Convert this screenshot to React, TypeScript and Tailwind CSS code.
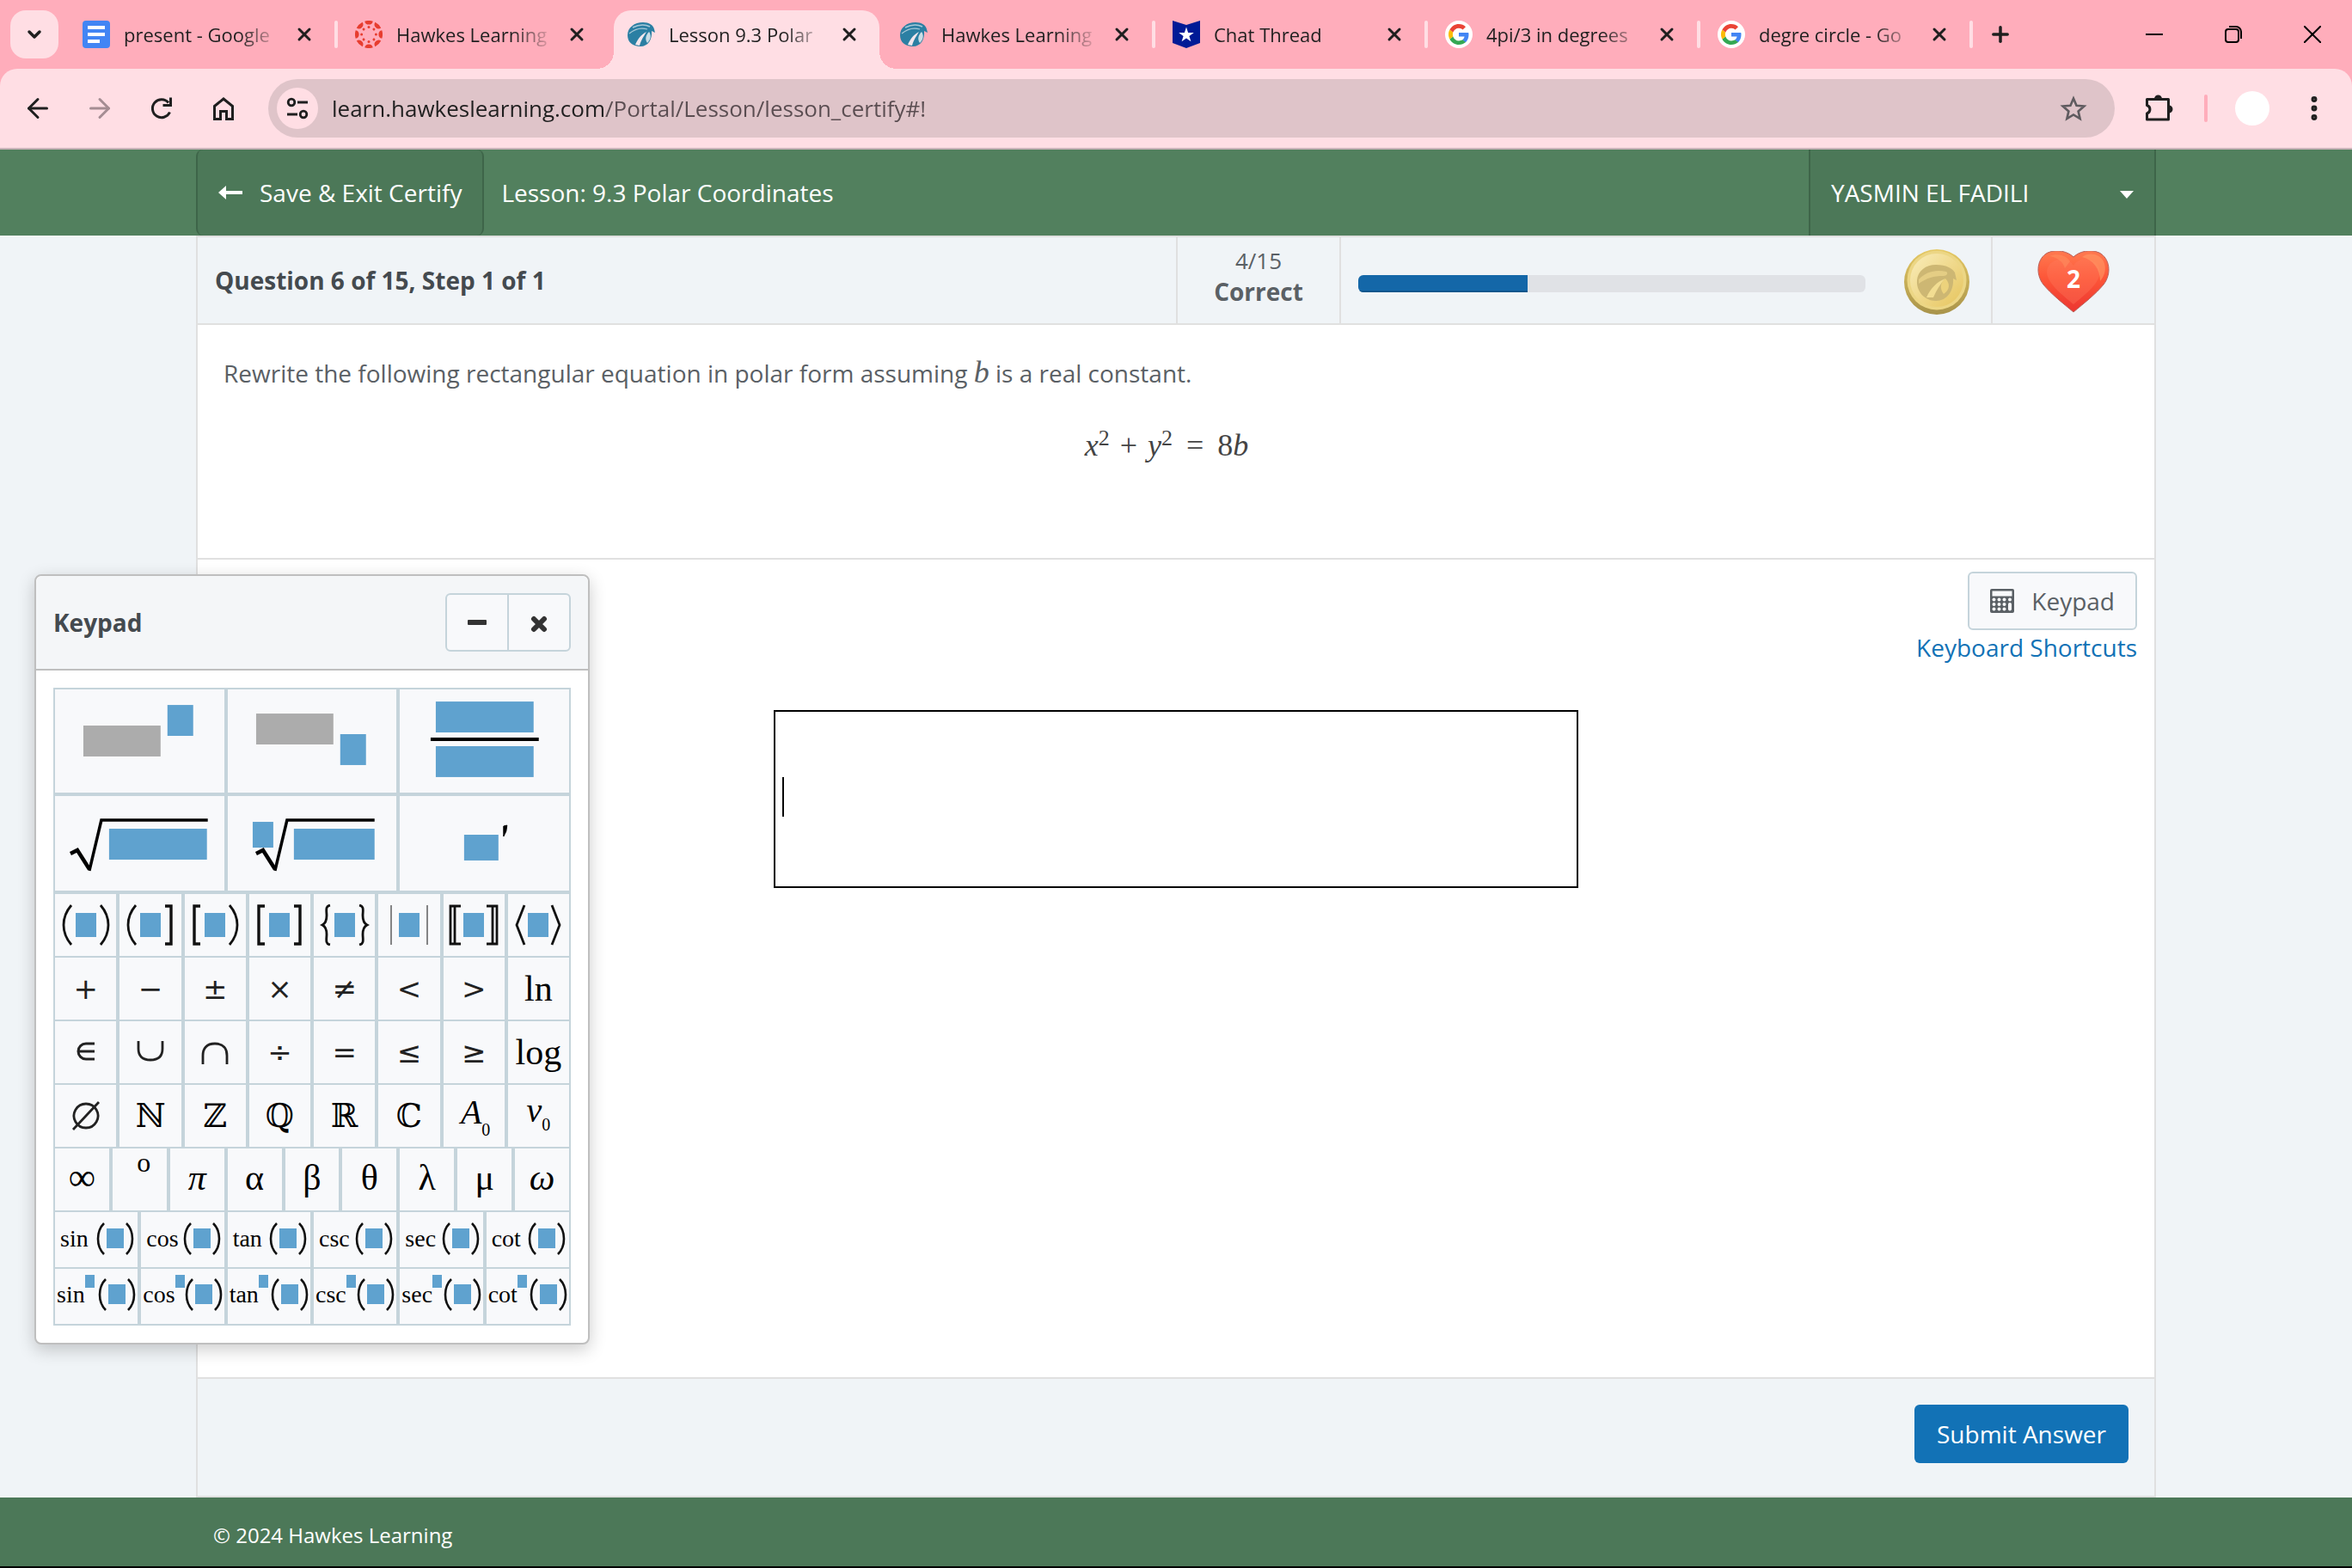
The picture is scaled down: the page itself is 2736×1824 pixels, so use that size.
import React from "react";
import {
  ArrowLeft,
  ArrowRight,
  ChevronDown,
  EllipsisVertical,
  Plus,
  X,
} from "lucide-react";

type IconProps = { className?: string };

/* ---------- favicons ---------- */

function DocsIcon() {
  return (
    <svg viewBox="0 0 32 32" className="size-8 shrink-0" aria-hidden="true">
      <rect width="32" height="32" rx="4" fill="#4285f4" />
      <path d="M6 6h20v4H6zM6 14h20v4H6zM6 22h14v4H6z" fill="#fff" />
    </svg>
  );
}

function CanvasIcon() {
  const spokes = [0, 45, 90, 135, 180, 225, 270, 315];
  return (
    <svg viewBox="0 0 32 32" className="size-8 shrink-0" aria-hidden="true" fill="#e73d2f">
      {spokes.map((a) => (
        <g key={a} transform={`rotate(${a} 16 16)`}>
          <path d="M11.2 .7a16 16 0 0 1 9.6 0a4.9 4.9 0 0 1-9.6 0z" />
          <circle cx="16" cy="7.6" r="1.5" />
        </g>
      ))}
    </svg>
  );
}

function HawkesIcon() {
  return (
    <svg viewBox="0 0 32 32" className="size-8 shrink-0" aria-hidden="true">
      <path
        d="M0 17C0 8 8 2 18 2c7 0 12 3 13 8l1 4-4-2c1 10-4 18-13 18C6 30 0 25 0 17z"
        fill="#2b7fa3"
      />
      <path d="M6 8c6-3 14-4 20-1" stroke="#a8c9d8" strokeWidth="1.6" fill="none" />
      <path d="M2 15c6-5 14-7 21-5" stroke="#a8c9d8" strokeWidth="1.2" fill="none" />
      <path d="M9 28c3-7 7-12 13-15-3 5-6 9-8 16z" fill="#f3e6ec" />
      <path d="M25 13c3 4 2 9-2 13-3-4-2-9 2-13z" fill="#c9dde6" />
    </svg>
  );
}

function ChatIcon() {
  return (
    <svg viewBox="0 0 32 32" className="size-8 shrink-0" aria-hidden="true">
      <path d="M0 0l16 5L32 0v26l-16 6L0 26z" fill="#001a96" />
      <path
        d="M16 7.500l2.100 6.400h6.700l-5.400 4 2 6.400-5.400-3.900-5.400 3.900 2-6.400-5.400-4h6.700z"
        fill="#fff"
      />
    </svg>
  );
}

function GoogleIcon() {
  return (
    <svg viewBox="0 0 32 32" className="size-8 shrink-0" aria-hidden="true">
      <circle cx="16" cy="16" r="16" fill="#fff" />
      <g transform="translate(4 4)">
        <path fill="#4285f4" d="M23.5 12.3c0-.9-.1-1.5-.3-2.2H12v4.5h6.5c-.1 1.1-.8 2.8-2.4 3.9l3.7 2.9c2.300-2.100 3.700-5.200 3.700-9.100z" />
        <path fill="#34a853" d="M12 24c3.200 0 5.900-1.100 7.900-2.900l-3.700-2.900c-1 .7-2.400 1.200-4.200 1.200-3.100 0-5.800-2.100-6.700-5l-3.900 3C3.400 21.300 7.400 24 12 24z" />
        <path fill="#fbbc05" d="M5.300 14.400c-.3-.8-.4-1.600-.4-2.400s.1-1.600.4-2.400L1.400 6.600C.5 8.200 0 10 0 12s.5 3.800 1.400 5.400z" />
        <path fill="#ea4335" d="M12 4.700c2.200 0 3.700 1 4.600 1.800L20 3.200C17.900 1.200 15.200 0 12 0 7.400 0 3.400 2.700 1.400 6.600l3.900 3c.9-2.800 3.600-4.900 6.700-4.900z" />
      </g>
    </svg>
  );
}

/* ---------- toolbar icons ---------- */

function ReloadIcon({ className }: IconProps) {
  return (
    <svg viewBox="0 0 28 28" className={className} aria-hidden="true" fill="none" stroke="#1f1f1f" strokeWidth="3">
      <path d="M23.500 18.500A10.500 10.500 0 1 1 22 7.500" />
      <path d="M24.500 1.500v9h-9" />
    </svg>
  );
}

function HomeIcon({ className }: IconProps) {
  return (
    <svg viewBox="0 0 28 28" className={className} aria-hidden="true" fill="none" stroke="#1f1f1f" strokeWidth="3">
      <path d="M3.500 11.500L14 3l10.500 8.500v15H17.500v-9h-7v9H3.500z" />
    </svg>
  );
}

function TuneIcon({ className }: IconProps) {
  return (
    <svg viewBox="0 0 28 28" className={className} aria-hidden="true" fill="none" stroke="#1f1f1f" strokeWidth="2.800">
      <circle cx="7" cy="7" r="3.800" />
      <path d="M14 7h12M2 21h12" />
      <circle cx="21" cy="21" r="3.800" />
    </svg>
  );
}

function StarIcon({ className }: IconProps) {
  return (
    <svg viewBox="0 0 32 32" className={className} aria-hidden="true" fill="none" stroke="#5f5b5f" strokeWidth="2.600">
      <path d="M16 4.500l3.500 8.200 8.900.8-6.800 5.900 2 8.700-7.600-4.600-7.600 4.600 2-8.700-6.800-5.900 8.900-.8z" />
    </svg>
  );
}

function PuzzleIcon({ className }: IconProps) {
  return (
    <svg viewBox="0 0 34 34" className={className} aria-hidden="true">
      <path
        d="M3.500 6.500h25v23.500h-25v-7a5 5 0 0 0 0-9.500z"
        fill="none"
        stroke="#1f1f1f"
        strokeWidth="3"
        strokeLinejoin="round"
      />
      <path d="M12 6a4.500 4.500 0 0 1 9 0zM29 13.500a4.500 4.500 0 0 1 0 9z" fill="#1f1f1f" />
    </svg>
  );
}

/* ---------- browser chrome ---------- */

type Tab = { title: string; icon: React.ReactNode; active?: boolean; sep?: boolean };

const tabs: Tab[] = [
  { title: "present - Google", icon: <DocsIcon />, sep: true },
  { title: "Hawkes Learning", icon: <CanvasIcon /> },
  { title: "Lesson 9.3 Polar", icon: <HawkesIcon />, active: true },
  { title: "Hawkes Learning", icon: <HawkesIcon />, sep: true },
  { title: "Chat Thread", icon: <ChatIcon />, sep: true },
  { title: "4pi/3 in degrees", icon: <GoogleIcon />, sep: true },
  { title: "degre circle - Go", icon: <GoogleIcon />, sep: true },
];

function BrowserTab({ tab }: { tab: Tab }) {
  return (
    <div className="relative flex h-full w-[317px] shrink pt-3">
      {tab.active && (
        <>
          <span className="absolute bottom-0 -left-4 size-5 bg-[radial-gradient(circle_at_0_0,transparent_20px,#ffdee4_20px)]" />
          <span className="absolute bottom-0 -right-4 size-5 bg-[radial-gradient(circle_at_100%_0,transparent_20px,#ffdee4_20px)]" />
        </>
      )}
      <div
        className={
          tab.active
            ? "mx-1 flex min-w-0 flex-1 items-center rounded-t-[20px] bg-[#ffdee4] px-4 pb-3"
            : "mx-1 flex min-w-0 flex-1 items-center px-4 pb-3"
        }
      >
        {tab.icon}
        <span className="ml-4 w-[182px] whitespace-nowrap text-[22px] leading-8 text-[#1f1f1f] [mask-image:linear-gradient(to_right,black_134px,transparent_184px)]">
          {tab.title}
        </span>
        <button aria-label={`Close ${tab.title}`} className="ml-3 flex size-8 items-center justify-center">
          <X className="size-6 text-[#1f1f1f]" strokeWidth={3} />
        </button>
      </div>
      {tab.sep && <span className="absolute right-0 top-6 h-8 w-1 rounded-full bg-[#ffdee4]" />}
    </div>
  );
}

function BrowserChrome() {
  return (
    <div className="bg-[#ffadbb]">
      <div className="flex h-20 items-start">
        <button
          aria-label="Search tabs"
          className="mt-3 ml-3 mr-2 flex h-14 w-14 items-center justify-center rounded-[18px] bg-[#ffdee4]"
        >
          <ChevronDown className="size-6 text-[#1f1f1f]" strokeWidth={3.5} />
        </button>
        {tabs.map((t, i) => (
          <BrowserTab key={i} tab={t} />
        ))}
        <button aria-label="New tab" className="ml-4 mt-6 flex size-8 items-center justify-center">
          <Plus className="size-7 text-[#1f1f1f]" strokeWidth={3} />
        </button>
        <div className="ml-auto mt-5 flex gap-[52px] pr-[26px]">
          <button aria-label="Minimize" className="flex size-10 items-center justify-center">
            <svg viewBox="0 0 20 20" className="size-5"><path d="M0 10h20" stroke="#000" strokeWidth="2" /></svg>
          </button>
          <button aria-label="Restore" className="flex size-10 items-center justify-center">
            <svg viewBox="0 0 22 22" className="size-[22px]" fill="none" stroke="#000" strokeWidth="2">
              <rect x="2" y="5" width="15" height="15" rx="3" />
              <path d="M6 2h8a6 6 0 0 1 6 6v8" />
            </svg>
          </button>
          <button aria-label="Close window" className="flex size-10 items-center justify-center">
            <svg viewBox="0 0 20 20" className="size-5"><path d="M0 0l20 20M20 0L0 20" stroke="#000" strokeWidth="2" /></svg>
          </button>
        </div>
      </div>

      <div className="flex h-[94px] items-center rounded-t-[20px] border-b-2 border-[#c9b4b9] bg-[#ffdee4] pl-6">
        <div className="flex gap-8">
          <button aria-label="Back" className="flex size-10 items-center justify-center">
            <ArrowLeft className="size-9 text-[#1f1f1f]" strokeWidth={2} />
          </button>
          <button aria-label="Forward" className="flex size-10 items-center justify-center">
            <ArrowRight className="size-9 text-[#a58d93]" strokeWidth={2} />
          </button>
          <button aria-label="Reload" className="flex size-10 items-center justify-center">
            <ReloadIcon className="size-7" />
          </button>
          <button aria-label="Home" className="flex size-10 items-center justify-center">
            <HomeIcon className="size-7" />
          </button>
        </div>
        <div className="ml-8 flex h-[68px] min-w-0 flex-1 items-center rounded-full bg-[#dfc4c9] pl-[10px] pr-8">
          <button aria-label="Site information" className="flex size-12 items-center justify-center rounded-full bg-[#ffdee4]">
            <TuneIcon className="size-7" />
          </button>
          <input
            aria-label="Address"
            type="text"
            readOnly
            value="learn.hawkeslearning.com/Portal/Lesson/lesson_certify#!"
            className="ml-4 min-w-0 flex-1 bg-[linear-gradient(to_right,#1f1f1f_318px,#5a4d51_318px)] bg-clip-text text-[26px] leading-10 text-transparent outline-none"
          />
          <button aria-label="Bookmark this tab">
            <StarIcon className="size-8" />
          </button>
        </div>
        <div className="flex items-center pl-[34px] pr-6">
          <button aria-label="Extensions">
            <PuzzleIcon className="size-[34px]" />
          </button>
          <span className="ml-9 h-8 w-1 rounded-full bg-[#ffadbb]" />
          <button aria-label="Profile" className="ml-8 size-10 rounded-full bg-white" />
          <button aria-label="Menu" className="ml-8 flex size-10 items-center justify-center">
            <EllipsisVertical className="size-9 text-[#1f1f1f]" strokeWidth={2.6} />
          </button>
        </div>
      </div>
    </div>
  );
}

/* ---------- lesson header ---------- */

function LessonHeader() {
  return (
    <header className="bg-[#52805e] text-white">
      <div className="mx-auto flex h-[100px] w-5/6 items-stretch">
        <button className="flex items-center rounded-lg border-x-2 border-[#3e6549] bg-[#4c7858] px-6">
          <svg viewBox="0 0 28 20" className="w-7" aria-hidden="true">
            <path d="M0 10l9-8v6h19v4H9v6z" fill="#fff" />
          </svg>
          <span className="ml-5">Save &amp; Exit Certify</span>
        </button>
        <h1 className="ml-5 flex items-center">Lesson: 9.3 Polar Coordinates</h1>
        <button className="ml-auto flex w-[404px] items-center justify-between border-x-2 border-[#3e6549] bg-[#4c7858] px-6">
          YASMIN EL FADILI
          <svg viewBox="0 0 16 9" className="mt-1 w-4" aria-hidden="true">
            <path d="M0 0h16L8 9z" fill="#fff" />
          </svg>
        </button>
      </div>
    </header>
  );
}

function Coin() {
  return (
    <svg viewBox="0 0 76 76" className="size-[76px]" role="img" aria-label="Certification coin">
      <defs>
        <linearGradient id="rim" x1="0" y1="0" x2="0" y2="1">
          <stop offset="0" stopColor="#e6c964" />
          <stop offset="1" stopColor="#a8934a" />
        </linearGradient>
        <linearGradient id="face" x1="0" y1="0" x2="1" y2="1">
          <stop offset="0" stopColor="#f9edbb" />
          <stop offset="1" stopColor="#e6c45c" />
        </linearGradient>
      </defs>
      <circle cx="38" cy="38" r="38" fill="url(#rim)" />
      <circle cx="38" cy="36" r="34.500" fill="#ecd685" />
      <circle cx="38" cy="36" r="31" fill="url(#face)" />
      <path
        d="M15 36c1-11 10-18 22-18 12 0 19 4 22 9l2 9-4-2c1 14-7 26-20 26-13 0-23-11-22-24z"
        fill="#cdb773"
      />
      <path d="M17 35c8-9 20-12 32-9 3 2 0 5-3 5-12 0-19 2-29 9z" fill="#e4cd84" />
      <path d="M26 56c5-11 12-18 22-22-6 6-10 13-14 22z" fill="#f2dd92" />
      <path d="M48 34c6 6 5 13-2 18-5-7-4-13 2-18z" fill="#ecd27c" />
    </svg>
  );
}

function Heart() {
  return (
    <div className="relative h-[72px] w-[84px]">
      <svg viewBox="0 0 84 72" className="h-[72px] w-[84px]" aria-hidden="true">
        <defs>
          <linearGradient id="heart" x1="0" y1="0" x2="0" y2="1">
            <stop offset="0" stopColor="#ff7a50" />
            <stop offset="0.450" stopColor="#fd5638" />
            <stop offset="1" stopColor="#ec3530" />
          </linearGradient>
        </defs>
        <path
          d="M42 71C30 61 16 50 7 39-3 26 0 8 12 2c11-5 24-1 30 5C48 1 61-3 72 2c12 6 15 24 5 37-9 11-23 22-35 32z"
          fill="url(#heart)"
          stroke="#b8605a"
          strokeWidth="1"
        />
        <path d="M42 62C30 52 19 43 14 34 7 22 14 12 24 10c9-2 15 2 18 7 3-5 9-9 18-7 10 2 17 12 10 24-5 9-16 18-28 28z" fill="#ff7a5e" opacity=".35" />
        <path d="M52 7c8-6 20-4 25 5 4 9 1 17-4 23 0-14-8-25-21-28z" fill="#ff9a66" opacity=".6" />
        <path d="M14 6c9-4 20-1 24 6l-6 8C30 12 22 7 14 6z" fill="#ff9a66" opacity=".4" />
      </svg>
      <span className="absolute inset-x-0 top-3 text-center text-[28px] leading-10 font-bold text-white">2</span>
    </div>
  );
}

function StatusBar() {
  return (
    <div className="flex h-[104px] items-stretch border-y-2 border-[#e0e0e0] bg-[#f0f4f7] text-[#5a6065]">
      <h2 className="flex flex-1 items-center pl-5 font-bold text-[#444a4f]">Question 6 of 15, Step 1 of 1</h2>
      <div className="flex w-[190px] flex-col items-center justify-center border-l-2 border-[#e0e0e0] pb-2.5">
        <span className="text-[26px] leading-9">4/15</span>
        <span className="leading-9 font-bold">Correct</span>
      </div>
      <div className="flex w-[758px] items-center border-l-2 border-[#e0e0e0] pl-5">
        <div
          role="progressbar"
          aria-label="Questions correct"
          aria-valuemin={0}
          aria-valuemax={15}
          aria-valuenow={4}
          className="mt-2 h-5 w-[590px] overflow-hidden rounded-md bg-[#e0e2e6]"
        >
          <div className="h-full w-1/3 border-b-2 border-[#11568c] bg-[#1467a8]" />
        </div>
        <div className="mt-1 ml-[45px]">
          <Coin />
        </div>
      </div>
      <div className="flex w-[190px] items-center justify-center border-l-2 border-[#e0e0e0] pt-1">
        <Heart />
      </div>
    </div>
  );
}

/* ---------- keypad ---------- */

const BLUE = "#5fa2cf";
const GRAY = "#acacac";

type Bracket = "(" | "[" | "{" | "|" | "[[" | "<";

const bracketPath: Record<Bracket, string> = {
  "(": "M12 1C6 8 3 15 3 24s3 16 9 23",
  "[": "M12 2H5v44h7",
  "{": "M12 1C6 2 8 8 8 13s-1 9-5 11c4 2 5 6 5 11s-2 11 4 12",
  "|": "M8 1v46",
  "[[": "M14 2H2v44h12M7 2v44",
  "<": "M13 1L4 24l9 23",
};

function Enclosed({ left, right }: { left: Bracket; right: Bracket }) {
  const stroke = (b: Bracket) => (b === "|" ? 1 : b === "[" ? 3.4 : 2.8);
  return (
    <svg viewBox="0 0 58 48" className="h-12 w-[58px]" fill="none" stroke="#111">
      <path d={bracketPath[left]} strokeWidth={stroke(left)} />
      <path d={bracketPath[right]} strokeWidth={stroke(right)} transform="translate(58 0) scale(-1 1)" />
      <rect x="17" y="10" width="24" height="28" fill={BLUE} stroke="none" />
    </svg>
  );
}

function Argument() {
  return (
    <svg viewBox="0 0 44 38" className="h-[38px] w-11 shrink-0" fill="none" stroke="#111" strokeWidth="2.600">
      <path d="M9 1C4 6 2 12 2 19s2 13 7 18M35 1c5 5 7 11 7 18s-2 13-7 18" />
      <rect x="12" y="7" width="20" height="23" fill={BLUE} stroke="none" />
    </svg>
  );
}

function Template({ label, tall, children }: { label: string; tall?: boolean; children: React.ReactNode }) {
  return (
    <button
      aria-label={label}
      className="flex min-w-0 flex-1 items-start justify-start overflow-hidden border-2 border-[#c5d4db] bg-[#f8f9fb]"
    >
      <svg
        viewBox={tall ? "0 0 197 120" : "0 0 197 110"}
        className={tall ? "h-[120px] w-[197px]" : "h-[110px] w-[197px]"}
        aria-hidden="true"
      >
        {children}
      </svg>
    </button>
  );
}

function Key({ label, last, children }: { label: string; last?: boolean; children: React.ReactNode }) {
  return (
    <button
      aria-label={label}
      className={
        last
          ? "flex min-w-0 flex-1 items-center justify-center border-2 border-[#c5d4db] bg-[#f8f9fb]"
          : "flex min-w-0 flex-1 items-center justify-center border-x-2 border-t-2 border-[#c5d4db] bg-[#f8f9fb]"
      }
    >
      {children}
    </button>
  );
}

function SetIcon({ kind }: { kind: "in" | "cup" | "cap" | "empty" }) {
  const d = {
    in: "M30 10H20a9 9 0 0 0 0 18h10M11 19h19",
    cup: "M6 7v9c0 8 4 13 14 13s14-5 14-13V7",
    cap: "M6 34V24c0-8 4-14 14-14s14 6 14 14v10",
    empty: "M20 6a14 14 0 1 0 .01 0M5 36L35 4",
  }[kind];
  return (
    <svg
      viewBox="0 0 40 40"
      className="size-10"
      fill="none"
      stroke="#222"
      strokeWidth={kind === "in" ? 3 : 2.8}
      aria-hidden="true"
    >
      <path d={d} />
    </svg>
  );
}

const enclosures: [string, Bracket, Bracket][] = [
  ["Parentheses", "(", "("],
  ["Half-open left", "(", "["],
  ["Half-open right", "[", "("],
  ["Square brackets", "[", "["],
  ["Braces", "{", "{"],
  ["Absolute value", "|", "|"],
  ["Double brackets", "[[", "[["],
  ["Angle brackets", "<", "<"],
];

const operators = ["+", "−", "±", "×", "≠", "<", ">"];
const numberSets = ["ℕ", "ℤ", "ℚ", "ℝ", "ℂ"];
const trig = ["sin", "cos", "tan", "csc", "sec", "cot"];

const symbol = "font-['DejaVu_Sans',sans-serif] text-[34px] leading-10 text-[#222]";

function Keypad() {
  return (
    <section
      aria-label="Keypad"
      className="absolute top-[668px] left-10 w-[646px] rounded-lg border-2 border-[#bfbfbf] bg-white shadow-[0_6px_20px_rgba(0,0,0,0.2)]"
    >
      <div className="flex h-[110px] items-center justify-between rounded-t-lg border-b-2 border-[#bfbfbf] bg-[#f4f6f8] px-5">
        <h3 className="font-bold text-[#444a4f]">Keypad</h3>
        <div className="flex h-[68px] w-[146px] rounded-md border-2 border-[#c5d4db] bg-[#f8f9fb]">
          <button aria-label="Minimize keypad" className="flex flex-1 items-center justify-center border-r-2 border-[#c5d4db]">
            <svg viewBox="0 0 22 6" className="w-[22px]"><rect width="22" height="6" rx="1" fill="#333" /></svg>
          </button>
          <button aria-label="Close keypad" className="flex flex-1 items-center justify-center">
            <svg viewBox="0 0 20 20" className="mt-1 size-5">
              <path d="M4 4l12 12M16 4L4 16" stroke="#333" strokeWidth="6" strokeLinecap="round" />
            </svg>
          </button>
        </div>
      </div>

      <div className="px-5 py-5 font-['Liberation_Serif',serif] text-black">
        <div className="flex h-[124px]">
          <Template label="Exponent" tall>
            <rect x="33" y="42" width="90" height="36" fill={GRAY} />
            <rect x="131" y="18" width="30" height="36" fill={BLUE} />
          </Template>
          <Template label="Subscript" tall>
            <rect x="33" y="28" width="90" height="36" fill={GRAY} />
            <rect x="131" y="52" width="30" height="36" fill={BLUE} />
          </Template>
          <Template label="Fraction" tall>
            <rect x="42" y="14" width="114" height="36" fill={BLUE} />
            <rect x="36" y="56" width="126" height="4" fill="#000" />
            <rect x="42" y="66" width="114" height="36" fill={BLUE} />
          </Template>
        </div>
        <div className="flex h-[114px]">
          <Template label="Square root">
            <path d="M18 67l8-4 14 22" fill="none" stroke="#000" strokeWidth="4.500" />
            <path d="M40 87L54 28h124" fill="none" stroke="#000" strokeWidth="3.500" />
            <rect x="63" y="38" width="114" height="36" fill={BLUE} />
          </Template>
          <Template label="Nth root">
            <rect x="29" y="30" width="24" height="30" fill={BLUE} />
            <path d="M33 67l8-4 14 22" fill="none" stroke="#000" strokeWidth="4.500" />
            <path d="M55 87L69 28h102" fill="none" stroke="#000" strokeWidth="3.500" />
            <rect x="77" y="38" width="94" height="36" fill={BLUE} />
          </Template>
          <Template label="Prime">
            <rect x="75" y="45" width="40" height="30" fill={BLUE} />
            <path d="M121 35l4-1-1 7-3 6z" fill="#000" stroke="#000" />
          </Template>
        </div>
        <div className="flex h-[74px]">
          {enclosures.map(([name, l, r]) => (
            <Key key={name} label={name}>
              <Enclosed left={l} right={r} />
            </Key>
          ))}
        </div>
        <div className="flex h-[74px]">
          {operators.map((s) => (
            <Key key={s} label={s}>
              <span className={symbol}>{s}</span>
            </Key>
          ))}
          <Key label="ln">
            <span className="text-[42px] leading-10">ln</span>
          </Key>
        </div>
        <div className="flex h-[74px]">
          <Key label="Element of"><SetIcon kind="in" /></Key>
          <Key label="Union"><SetIcon kind="cup" /></Key>
          <Key label="Intersection"><SetIcon kind="cap" /></Key>
          {["÷", "=", "≤", "≥"].map((s) => (
            <Key key={s} label={s}>
              <span className={symbol}>{s}</span>
            </Key>
          ))}
          <Key label="log">
            <span className="text-[42px] leading-10">log</span>
          </Key>
        </div>
        <div className="flex h-[74px]">
          <Key label="Empty set"><SetIcon kind="empty" /></Key>
          {numberSets.map((s) => (
            <Key key={s} label={s}>
              <span className="font-['DejaVu_Serif','DejaVu_Sans',serif] text-[38px] leading-10">{s}</span>
            </Key>
          ))}
          <Key label="A sub">
            <span className="pb-2 pl-1 text-[40px] leading-10 italic">A</span>
            <span className="mt-8 text-[20px] leading-5">0</span>
          </Key>
          <Key label="v sub">
            <span className="pb-3 text-[40px] leading-10 italic">v</span>
            <span className="mt-5 text-[20px] leading-5">0</span>
          </Key>
        </div>
        <div className="flex h-[74px]">
          <Key label="Infinity"><span className="pb-1 text-[44px] leading-10">∞</span></Key>
          <Key label="Degree"><span className="mb-10 pl-2.5 text-[32px] leading-6">o</span></Key>
          <Key label="Pi"><span className="pb-1 text-[42px] leading-10 italic">π</span></Key>
          {["α", "β", "θ", "λ", "μ"].map((s) => (
            <Key key={s} label={s}>
              <span className="pb-1 text-[42px] leading-10">{s}</span>
            </Key>
          ))}
          <Key label="Omega"><span className="pb-1 text-[42px] leading-10 italic">ω</span></Key>
        </div>
        <div className="flex h-[66px]">
          {trig.map((fn) => (
            <Key key={fn} label={fn}>
              <span className="flex w-full items-center justify-between pb-0.5 pl-1.5 pr-1 text-[28px] leading-8">
                {fn}
                <Argument />
              </span>
            </Key>
          ))}
        </div>
        <div className="flex h-[68px]">
          {trig.map((fn) => (
            <Key key={fn} label={`${fn} power`} last>
              <span className="flex w-full items-center justify-between px-0.5 pb-1 text-[28px] leading-8">
                <span className="flex items-center">
                  {fn}
                  <span className="mb-8 h-[15px] w-[11px] bg-[#5fa2cf]" />
                </span>
                <Argument />
              </span>
            </Key>
          ))}
        </div>
      </div>
    </section>
  );
}

/* ---------- question and answer ---------- */

function CalculatorIcon() {
  return (
    <svg viewBox="0 0 28 28" className="size-7" aria-hidden="true">
      <rect width="28" height="28" rx="2" fill="#5a6065" />
      <rect x="2.500" y="2.500" width="23" height="6" fill="#f8f9fb" />
      <g fill="#f8f9fb">
        {[4.500, 10.500, 16.500].map((x) =>
          [12.500, 18, 23.500].map((y) => <circle key={`${x}-${y}`} cx={x} cy={y} r="2" />),
        )}
        <circle cx="23" cy="12.500" r="2" />
        <rect x="21" y="16" width="4" height="9.500" rx="2" />
      </g>
    </svg>
  );
}

export default function App() {
  return (
    <div className="relative flex min-h-screen flex-col bg-[#f0f4f7] font-['Open_Sans','Noto_Sans',sans-serif] text-[28px]">
      <BrowserChrome />
      <LessonHeader />
      <main className="mx-auto flex w-5/6 flex-1 flex-col border-x-2 border-b-2 border-[#e0e0e0] bg-white">
        <StatusBar />
        <section className="min-h-[273px] border-b-2 border-[#e0e0e0] pt-[35px] pr-[52px] pl-[30px] text-[#5a6065]">
          <p className="leading-10">
            Rewrite the following rectangular equation in polar form assuming{" "}
            <span className="font-['Liberation_Serif',serif] text-[36px] leading-10 italic">b</span> is a real constant.
          </p>
          <p className="mt-10 flex items-center justify-center font-['Liberation_Serif',serif] text-[36px] leading-10 text-[#444]">
            <span className="italic">x</span>
            <span className="mb-4 text-[26px] leading-8">2</span>
            <span className="mx-3">+</span>
            <span className="italic">y</span>
            <span className="mb-4 text-[26px] leading-8">2</span>
            <span className="mx-4">=</span>
            <span>8</span>
            <span className="italic">b</span>
          </p>
        </section>
        <section className="flex flex-1 flex-col px-5 pt-3.5">
          <div className="flex flex-col items-end">
            <button className="flex h-[68px] items-center gap-5 rounded-md border-2 border-[#c5d4db] bg-[#f8f9fb] px-6 text-[#5a6065]">
              <CalculatorIcon />
              Keypad
            </button>
            <a href="#shortcuts" className="leading-10 text-[#1272b6]">
              Keyboard Shortcuts
            </a>
          </div>
          <div className="relative mx-auto mt-[53px] w-[936px]">
            <input
              aria-label="Answer"
              type="text"
              className="h-[207px] w-full border-2 border-black bg-white px-2 text-[36px] outline-none"
            />
            <span className="absolute top-[78px] left-2.5 h-[46px] w-0.5 bg-black" />
          </div>
        </section>
        <div className="flex h-[138px] items-center justify-end border-t-2 border-[#e0e0e0] bg-[#f0f4f7] pr-[30px] pb-2">
          <button className="h-[68px] rounded-md bg-[#1272b6] px-[26px] text-white">Submit Answer</button>
        </div>
      </main>
      <footer className="border-b-2 border-black bg-[#4c7858] text-white">
        <div className="mx-auto flex h-20 w-5/6 items-center px-5 pt-2 text-[24px]">© 2024 Hawkes Learning</div>
      </footer>
      <Keypad />
    </div>
  );
}
